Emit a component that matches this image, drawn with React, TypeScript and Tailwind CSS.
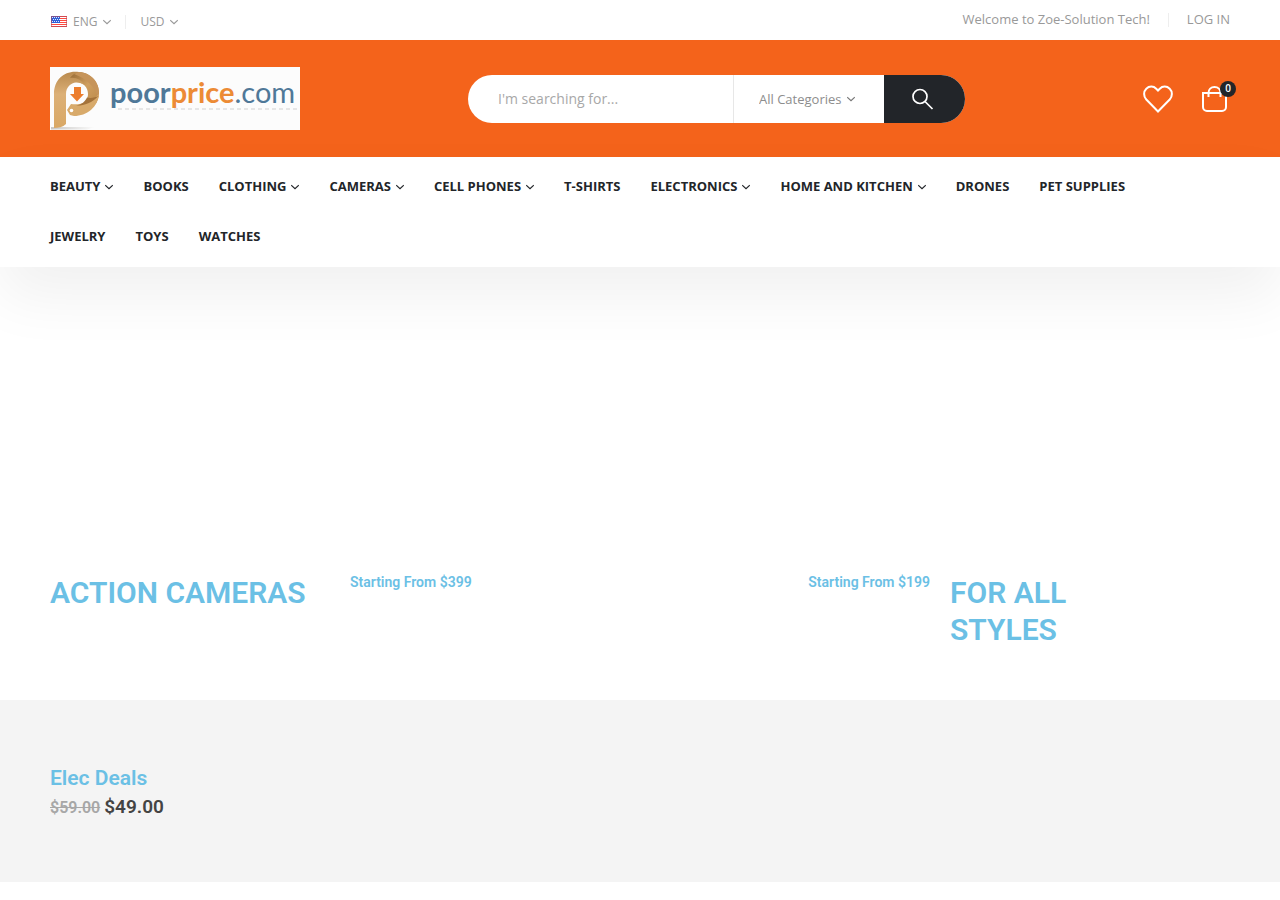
const navItems = [
  { label: "Beauty", menu: true },
  { label: "Books" },
  { label: "Clothing", menu: true },
  { label: "Cameras", menu: true },
  { label: "Cell Phones", menu: true },
  { label: "T-Shirts" },
  { label: "Electronics", menu: true },
  { label: "Home and Kitchen", menu: true },
  { label: "Drones" },
  { label: "Pet Supplies" },
  { label: "Jewelry" },
  { label: "Toys" },
  { label: "Watches" },
];

function Chevron({ className = "" }: { className?: string }) {
  return (
    <svg
      viewBox="0 0 8 6"
      fill="none"
      stroke="currentColor"
      strokeWidth="1.200"
      className={`h-[6px] w-[8px] shrink-0 ${className}`}
      aria-hidden="true"
    >
      <path d="M.2 1.200L4 4.600l3.800-3.400" />
    </svg>
  );
}

function UsFlag() {
  return (
    <svg viewBox="0 0 16 11" className="h-[11px] w-[16px]" aria-hidden="true">
      <rect width="16" height="11" fill="#fff" />
      <path d="M0 .5h16M0 2.5h16M0 4.5h16M0 6.5h16M0 8.5h16M0 10.5h16" stroke="#ff4a40" />
      <rect width="9" height="7" fill="#2f5fd8" />
      <path d="M1 1.5h8M2 3.5h7M1 5.5h8" stroke="#dfe8ff" strokeDasharray="1 1" />
      <rect x=".5" y=".5" width="15" height="10" fill="none" stroke="#b44a5c" strokeOpacity=".6" />
    </svg>
  );
}

function Logo() {
  return (
    <svg viewBox="0 0 250 63" className="h-[63px] w-[250px]" role="img" aria-label="poorprice.com">
      <defs>
        <linearGradient id="paper" x1="0" y1="0" x2="0" y2="1">
          <stop offset="0" stopColor="#b98a4e" />
          <stop offset=".4" stopColor="#dcb077" />
          <stop offset="1" stopColor="#d9a865" />
        </linearGradient>
        <linearGradient id="fold" x1="0" y1="0" x2="1" y2="1">
          <stop offset="0" stopColor="#8d612d" />
          <stop offset=".5" stopColor="#cf9f60" />
          <stop offset="1" stopColor="#b98747" />
        </linearGradient>
        <linearGradient id="shade" x1="0" y1="0" x2="1" y2="0">
          <stop offset="0" stopColor="#c9c7c4" />
          <stop offset="1" stopColor="#fcfcfc" />
        </linearGradient>
      </defs>
      <rect width="250" height="63" fill="#fcfcfc" />
      <path d="M1 60h44l-8 2.500H1z" fill="url(#shade)" />
      {/* right side of the loop */}
      <path d="M16 10C22 4 33 3 40 9c6 4 9 10 9 17 0 7-4 13-8 15L30 38c5-2 8-6 8-11 0-7-5-12-12-12z" fill="url(#fold)" />
      <path d="M28 5c12 0 21 9 21 21l-1 4C45 20 37 12 24 7z" fill="#c6945a" />
      {/* tag end */}
      <path d="M49 27c-1 13-12 22-25 22l-4-1-3-5 4-6c7 1 18 0 28-10z" fill="#d8aa6b" />
      <path d="M48.500 29C42 36 33 39 26 38.500c6-1 9-4 11-8 4 1 8 0 11.500-1.500z" fill="#a4733a" />
      {/* stem */}
      <path d="M29 5C15 3 4 12 4 27v34c4 0 9-1 12-4V27c0-7 5-11 10-11.500 3-.3 6 1 8 2.500-2-5-8-8-14-7 2-3 5-5 9-6z" fill="url(#paper)" />
      <circle cx="21.500" cy="43.500" r="1.800" fill="#fff" />
      <path d="M24 20h7v7h3l-7 7.500-7-7.500h4z" fill="#ec7d2d" />
      <path d="M68 42h180" stroke="#dedede" strokeWidth="1.500" strokeDasharray="4 3" />
      <text x="60" y="36" fontFamily="Lato, sans-serif" fontSize="29" fontWeight="700" fill="#4f7898">
        poor<tspan fill="#ec8b35">price</tspan>
        <tspan fontWeight="400">.com</tspan>
      </text>
    </svg>
  );
}

function TopBar() {
  return (
    <div className="flex h-10 items-center justify-between px-[50px] text-[#999]">
      <div className="flex items-center pt-[3px] text-[12px]">
        <button type="button" className="flex items-center pl-px">
          <UsFlag />
          <span className="ml-[6px]">ENG</span>
          <Chevron className="ml-[6px]" />
        </button>
        <span className="mx-[14px] h-[14px] w-px bg-[#eee]" />
        <button type="button" className="flex items-center">
          USD
          <Chevron className="ml-[6px]" />
        </button>
      </div>
      <div className="flex items-center text-[13px]">
        <span>Welcome to Zoe-Solution Tech!</span>
        <span className="mx-[18px] h-[14px] w-px bg-[#eee]" />
        <a href="#">LOG IN</a>
      </div>
    </div>
  );
}

function SearchForm() {
  return (
    <form className="flex h-12 max-w-[497px] flex-1 overflow-hidden rounded-full bg-white">
      <input
        type="search"
        aria-label="Search"
        placeholder="I'm searching for..."
        className="min-w-0 flex-1 pl-[30px] text-[14px] text-[#777] outline-none placeholder:text-[#a8a8a8]"
      />
      <div className="relative flex w-[151px] items-center border-l border-[#e7e7e7]">
        <select
          aria-label="Category"
          className="h-full w-full appearance-none pt-[2px] pl-[25px] text-[13px] text-[#8d8d8d] outline-none"
        >
          <option>All Categories</option>
        </select>
        <Chevron className="pointer-events-none absolute right-[29px] text-[#777]" />
      </div>
      <button type="submit" aria-label="Search" className="flex w-[81px] items-center bg-[#222529] pl-7 text-white">
        <svg viewBox="0 0 22 22" fill="none" stroke="currentColor" strokeWidth="1.700" className="size-[22px]">
          <circle cx="8" cy="8.500" r="7" />
          <path d="M13 13.500l7.500 7.500" />
        </svg>
      </button>
    </form>
  );
}

function Header() {
  return (
    <div className="flex items-center bg-[#f4631b] px-[50px] py-[27px]">
      <a href="#" className="mr-[168px] shrink-0">
        <Logo />
      </a>
      <SearchForm />
      <div className="ml-auto flex items-center gap-[28px] pr-[3px] text-white">
        <a href="#" aria-label="Wishlist">
          <svg viewBox="0 0 30 28" fill="none" stroke="currentColor" strokeWidth="2" className="h-[28px] w-[30px]">
            <path d="M15 26.500L3.300 14.500C.4 11.300.4 6.500 3.300 3.700c3-2.900 7.200-2.700 9.900 0L15 5.500l1.800-1.800c2.700-2.700 6.900-2.900 9.900 0 2.900 2.800 2.900 7.600 0 10.800z" />
          </svg>
        </a>
        <a href="#" aria-label="Cart" className="relative">
          <svg viewBox="0 0 26 28" fill="none" stroke="currentColor" strokeWidth="2" className="h-[28px] w-[26px]">
            <path d="M2 8h23v14a4 4 0 0 1-4 4H6a4 4 0 0 1-4-4z" />
            <path d="M7.500 12V8c0-3.500 2.500-6 6-6s6 2.500 6 6v4" />
          </svg>
          <span className="absolute -top-1 -right-[9px] flex size-4 items-center justify-center rounded-full bg-[#222529] text-[10px] font-semibold">
            0
          </span>
        </a>
      </div>
    </div>
  );
}

function MainNav() {
  return (
    <nav className="relative bg-white px-[50px] py-[15px] shadow-[0_30px_60px_0_rgba(0,0,0,0.06)]">
      <ul className="flex flex-wrap gap-y-5">
        {navItems.map((item) => (
          <li key={item.label} className="mr-[30px]">
            <a href="#" className="flex h-[30px] items-center text-[13px] font-bold text-[#222529] uppercase">
              {item.label}
              {item.menu && <Chevron className="ml-[5px]" />}
            </a>
          </li>
        ))}
      </ul>
    </nav>
  );
}

function Banner() {
  return (
    <section className="grid grid-cols-4 gap-5 px-[50px] pt-[307px] pb-[52px] font-[Roboto,sans-serif] font-semibold text-[#6bc0e5]">
      <h2 className="text-[30px] leading-[37px]">ACTION CAMERAS</h2>
      <p className="text-[14px] leading-4">Starting From $399</p>
      <p className="text-right text-[14px] leading-4">Starting From $199</p>
      <h2 className="text-[30px] leading-[37px]">
        FOR ALL
        <br />
        STYLES
      </h2>
    </section>
  );
}

function Deals() {
  return (
    <section className="bg-[#f4f4f4] px-[50px] pt-[64px] pb-[60px] font-[Roboto,sans-serif] font-semibold">
      <h3 className="text-[21px] leading-7 text-[#6bc0e5]">Elec Deals</h3>
      <p className="flex items-baseline gap-1 text-[19px] leading-[29px] text-[#444]">
        <del className="text-[16px] text-[#a7a7a7]">$59.00</del>
        <span>$49.00</span>
      </p>
    </section>
  );
}

export default function App() {
  return (
    <div className="bg-white font-['Open_Sans',sans-serif]">
      <header>
        <TopBar />
        <Header />
        <MainNav />
      </header>
      <main>
        <Banner />
        <Deals />
      </main>
    </div>
  );
}
